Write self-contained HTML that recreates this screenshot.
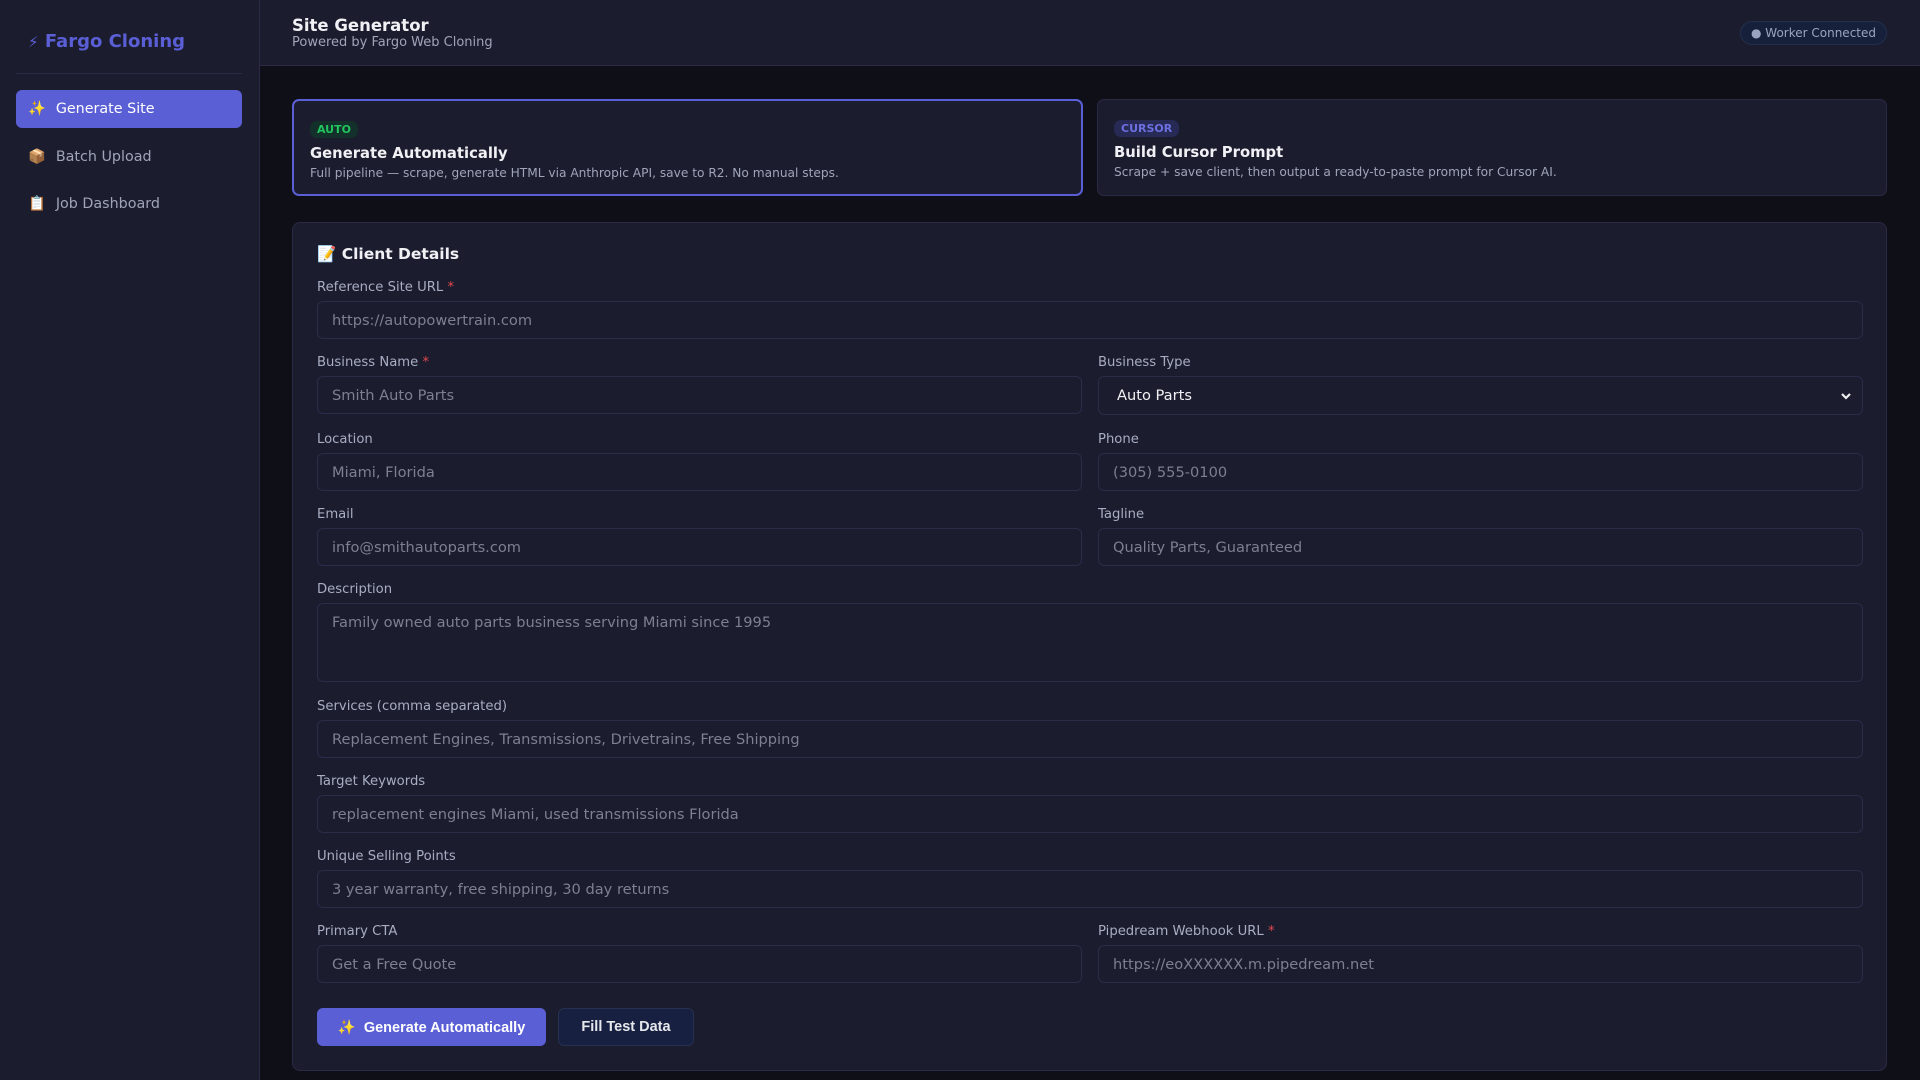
<!DOCTYPE html>
<html><head><meta charset="utf-8"><style>
*{box-sizing:border-box;margin:0;padding:0}
body{width:1920px;height:1080px;overflow:hidden;background:#0f0f17;font-family:"DejaVu Sans","Liberation Sans",sans-serif;color:#e5e7eb;position:relative}
.side{position:absolute;left:0;top:0;width:260px;height:1080px;background:#1b1c2e;border-right:1px solid #2a2a45}
.logo{position:absolute;left:28px;top:31px;font-size:18px;font-weight:bold;color:#5b5fd6}
.div{position:absolute;left:16px;top:73px;width:226px;height:1px;background:#2a2a45}
.nav{position:absolute;left:16px;width:226px;height:38px;border-radius:6px;font-size:14.3px;color:#a0a4b8;padding-left:12px;display:flex;align-items:center;gap:10px}
.nav.act{background:#5b5fd6;color:#fff}
.head{position:absolute;left:260px;top:0;right:0;height:66px;background:#1b1c2e;border-bottom:1px solid #2a2a45}
.ht{position:absolute;left:32px;top:16px;font-size:16.5px;font-weight:bold;color:#f1f1f5}
.hs{position:absolute;left:32px;top:35px;font-size:13px;color:#a0a4b8}
.badge{position:absolute;right:33px;top:21px;height:24px;padding:0 10px;border-radius:12px;background:#16203a;border:1px solid #22304d;font-size:12px;color:#9aa4c0;display:flex;align-items:center}
.card{position:absolute;top:99px;height:97px;border-radius:7px;background:#1b1c2e;border:1.5px solid #2a2a45;padding:0 16px}
.card.sel{border:2px solid #5b5fd6}
.tag{position:absolute;left:16px;top:20px;font-size:11px;font-weight:bold;padding:2px 7px;border-radius:7px}
.ct{position:absolute;left:16px;top:44px;font-size:14.8px;font-weight:bold;color:#f1f1f5}
.cd{position:absolute;left:16px;top:65px;font-size:12.2px;color:#a0a4b8;white-space:nowrap}
.panel{position:absolute;left:292px;top:222px;width:1595px;height:849px;background:#1b1c2e;border:1px solid #2a2a45;border-radius:8px}
.h2{position:absolute;left:317px;top:245px;font-size:15.5px;font-weight:bold;color:#f1f1f5}
.lab{position:absolute;font-size:13.2px;color:#a8adc2;margin-top:1px}
.lab b{color:#e5484d;font-weight:normal}
.in{position:absolute;height:38px;border:1px solid #2b2b4a;border-radius:6px;background:#1b1c2e;font-size:14.6px;color:#7d8091;padding-left:14px;display:flex;align-items:center}
.L{left:317px;width:765px}.R{left:1098px;width:765px}.F{left:317px;width:1546px}
.btn{position:absolute;top:1008px;height:38px;border-radius:6px;font-family:"Liberation Sans",sans-serif;font-weight:bold;font-size:14.5px;display:flex;align-items:center;justify-content:center;color:#fff}
</style></head><body>
<div class="side">
<div class="logo"><span style="font-weight:normal;font-size:15px">⚡</span> Fargo Cloning</div>
<div class="div"></div>
<div class="nav act" style="top:90px">✨ <span>Generate Site</span></div>
<div class="nav" style="top:138px">📦 <span>Batch Upload</span></div>
<div class="nav" style="top:185px">📋 <span>Job Dashboard</span></div>
</div>
<div class="head"><div class="ht">Site Generator</div><div class="hs">Powered by Fargo Web Cloning</div><div class="badge">● Worker Connected</div></div>
<div class="card sel" style="left:292px;width:791px"><span class="tag" style="background:#13302a;color:#22c55e">AUTO</span><div class="ct">Generate Automatically</div><div class="cd">Full pipeline — scrape, generate HTML via Anthropic API, save to R2. No manual steps.</div></div>
<div class="card" style="left:1097px;width:790px"><span class="tag" style="background:#272a55;color:#6c70e0">CURSOR</span><div class="ct">Build Cursor Prompt</div><div class="cd">Scrape + save client, then output a ready-to-paste prompt for Cursor AI.</div></div>
<div class="panel"></div>
<div class="h2">📝 Client Details</div>
<div class="lab" style="left:317px;top:279px">Reference Site URL <b>*</b></div>
<div class="in F" style="top:301px">https://autopowertrain.com</div>
<div class="lab" style="left:317px;top:354px">Business Name <b>*</b></div>
<div class="in L" style="top:376px">Smith Auto Parts</div>
<div class="lab" style="left:1098px;top:354px">Business Type</div>
<div class="in R" style="top:376px;height:39px;color:#f1f1f5;padding-left:18px;justify-content:space-between;padding-right:10px">Auto Parts<svg width="12" height="8" viewBox="0 0 12 8"><path d="M2 2l4 4 4-4" stroke="#eee" stroke-width="2.2" fill="none"/></svg></div>
<div class="lab" style="left:317px;top:431px">Location</div>
<div class="in L" style="top:453px">Miami, Florida</div>
<div class="lab" style="left:1098px;top:431px">Phone</div>
<div class="in R" style="top:453px">(305) 555-0100</div>
<div class="lab" style="left:317px;top:506px">Email</div>
<div class="in L" style="top:528px">info@smithautoparts.com</div>
<div class="lab" style="left:1098px;top:506px">Tagline</div>
<div class="in R" style="top:528px">Quality Parts, Guaranteed</div>
<div class="lab" style="left:317px;top:581px">Description</div>
<div class="in F" style="top:603px;height:79px;align-items:flex-start;padding-top:10px">Family owned auto parts business serving Miami since 1995</div>
<div class="lab" style="left:317px;top:698px">Services (comma separated)</div>
<div class="in F" style="top:720px">Replacement Engines, Transmissions, Drivetrains, Free Shipping</div>
<div class="lab" style="left:317px;top:773px">Target Keywords</div>
<div class="in F" style="top:795px">replacement engines Miami, used transmissions Florida</div>
<div class="lab" style="left:317px;top:848px">Unique Selling Points</div>
<div class="in F" style="top:870px">3 year warranty, free shipping, 30 day returns</div>
<div class="lab" style="left:317px;top:923px">Primary CTA</div>
<div class="in L" style="top:945px">Get a Free Quote</div>
<div class="lab" style="left:1098px;top:923px">Pipedream Webhook URL <b>*</b></div>
<div class="in R" style="top:945px">https://eoXXXXXX.m.pipedream.net</div>
<div class="btn" style="left:317px;width:229px;background:#5b5fd6">✨&nbsp; Generate Automatically</div>
<div class="btn" style="left:558px;width:136px;background:#172040;border:1px solid #26304f;color:#e5e7eb">Fill Test Data</div>
</body></html>
